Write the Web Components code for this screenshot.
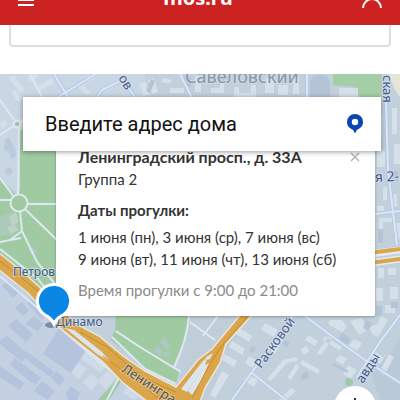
<!DOCTYPE html>
<html lang="ru">
<head>
<meta charset="utf-8">
<meta name="viewport" content="width=device-width, initial-scale=1">
<title>mos.ru</title>
<style>
  body {
    margin: 0;
    min-height: 100vh;
    display: flex;
    flex-direction: column;
    background: #fff;
    color: #333;
    font: 15px/22px Lato, "Noto Sans", sans-serif;
  }
  walk-map { flex: 1; }
</style>
</head>
<body>
<site-header>mos.ru</site-header>
<form-panel></form-panel>
<walk-map>
  <address-search label="Введите адрес дома"></address-search>
  <walk-card>
    <span slot="title">Ленинградский просп., д. 33А</span>
    <span slot="group">Группа 2</span>
    <span slot="dates">1 июня (пн), 3 июня (ср), 7 июня (вс)<br>9 июня (вт), 11 июня (чт), 13 июня (сб)</span>
    <span slot="time">Время прогулки с 9:00 до 21:00</span>
  </walk-card>
</walk-map>

<script>
class SiteHeader extends HTMLElement {
  constructor() {
    super();
    this.attachShadow({ mode: 'open' }).innerHTML = `
      <style>
        :host { display: block; }
        header {
          display: flex;
          justify-content: space-between;
          align-items: flex-end;
          height: 25px;
          padding: 0 16px;
          box-sizing: border-box;
          overflow: hidden;
          background: #cc2222;
          border-bottom: 1px solid #b93030;
        }
        a {
          padding-bottom: 12px;
          color: #fff;
          font: bold 20px/28px "Noto Sans", sans-serif;
          text-decoration: none;
        }
        button { padding: 0; border: 0; background: none; }
        svg { display: block; }
      </style>
      <header>
        <button aria-label="Меню"><svg width="20" height="34" viewBox="0 0 20 34" fill="none" stroke="#fff" stroke-width="2"><path d="M2 5H18M2 10H18M2 15H18"/></svg></button>
        <a href="#"><slot></slot></a>
        <button aria-label="Профиль"><svg width="24" height="36" viewBox="0 0 24 36" fill="none" stroke="#fff" stroke-width="2"><circle cx="12" cy="6" r="5"/><path d="M3 20C4 8 20 8 21 20"/></svg></button>
      </header>`;
  }
}

class FormPanel extends HTMLElement {
  constructor() {
    super();
    this.attachShadow({ mode: 'open' }).innerHTML = `
      <style>
        :host { display: block; padding: 0 9px 27px; }
        div {
          height: 20px;
          border: 2px solid #dfdfe1;
          border-top: 0;
          border-radius: 0 0 4px 4px;
        }
      </style>
      <div></div>`;
  }
}

class AddressSearch extends HTMLElement {
  constructor() {
    super();
    this.attachShadow({ mode: 'open' }).innerHTML = `
      <style>
        :host { display: block; position: relative; z-index: 2; }
        form {
          display: flex;
          align-items: center;
          height: 54px;
          padding: 0 18px 0 22px;
          background: #fff;
          box-shadow: 0 1px 5px rgba(0, 0, 0, .4);
        }
        input {
          flex: 1;
          min-width: 0;
          padding: 0;
          border: 0;
          outline: 0;
          background: none;
          color: #111;
          font: 20px/28px Roboto, sans-serif;
        }
        input::placeholder { color: #111; opacity: 1; }
        button { padding: 0; border: 0; background: none; }
        svg { display: block; }
      </style>
      <form>
        <input type="text">
        <button type="button" aria-label="Моё местоположение"><svg width="16" height="20" viewBox="0 0 16 20"><path fill="#0b45b5" fill-rule="evenodd" d="M8 0a8 8 0 0 1 8 8c0 4-2.700 6.600-6 7.700L8 19.500 6 15.700C2.700 14.600 0 12 0 8a8 8 0 0 1 8-8zm0 4.800a3.200 3.200 0 1 0 0 6.400 3.200 3.200 0 0 0 0-6.400z"/></svg></button>
      </form>`;
  }

  connectedCallback() {
    const input = this.shadowRoot.querySelector('input');
    input.placeholder = this.getAttribute('label');
    input.setAttribute('aria-label', this.getAttribute('label'));
  }
}

class WalkCard extends HTMLElement {
  constructor() {
    super();
    this.attachShadow({ mode: 'open' }).innerHTML = `
      <style>
        :host {
          display: block;
          position: relative;
          margin: -16px 6px 0 33px;
          padding: 11px 14px 15px 22px;
          background: #fff;
          border-radius: 0 0 2px 2px;
          box-shadow: 0 1px 3px rgba(0, 0, 0, .3);
        }
        .top { display: flex; justify-content: space-between; align-items: center; }
        h2 { margin: 0; font-size: 16px; line-height: 22px; }
        h3 { margin: 9px 0 5px; font-size: 15px; line-height: 22px; }
        p { margin: 0; }
        .time { margin-top: 9px; color: #8a8a8a; }
        button { padding: 0; border: 0; background: none; }
        svg { display: block; }
      </style>
      <div class="top">
        <h2><slot name="title"></slot></h2>
        <button aria-label="Закрыть"><svg width="12" height="12" viewBox="0 0 12 12" stroke="#b5b5b5" stroke-width="1.500"><path d="M2 2L10 10M10 2L2 10"/></svg></button>
      </div>
      <p><slot name="group"></slot></p>
      <h3>Даты прогулки:</h3>
      <p><slot name="dates"></slot></p>
      <p class="time"><slot name="time"></slot></p>`;

    this.shadowRoot.querySelector('button').addEventListener('click', () => this.remove());
  }
}

class WalkMap extends HTMLElement {
  constructor() {
    super();
    this.attachShadow({ mode: 'open' }).innerHTML = `
      <style>
        :host {
          display: block;
          position: relative;
          padding: 23px 19px 84px 23px;
          box-sizing: border-box;
          overflow: hidden;
          background: #c2d0db;
        }
        .canvas { position: absolute; inset: 0; width: 100%; height: 100%; }
        .canvas text { font-family: "Noto Sans", sans-serif; fill: #455a86; paint-order: stroke; stroke: #dbe5f0; stroke-width: 2px; stroke-opacity: .6; }
        .pin { position: absolute; left: 34px; top: 209px; z-index: 3; }
        .zoom {
          position: absolute;
          right: 24px;
          bottom: -28px;
          width: 42px;
          height: 42px;
          padding: 0;
          border: 0;
          border-radius: 50%;
          background: #fff;
        }
        .zoom svg { display: block; margin: auto; }
      </style>
      <svg class="canvas" viewBox="0 74 400 326" preserveAspectRatio="xMinYMin slice">
        <!-- districts -->
        <path fill="#c9d6e3" d="M0 74H145V155H20V196L0 178z"/>
        <path fill="#c4d1e2" d="M0 270L60 325 150 400H0z"/>
        <path fill="#b9c9d8" d="M372 375L400 340V400H380z"/>
        <path fill="#c0ced9" d="M180 316H250L205 400H180z"/>
        <path fill="#e6e4d7" d="M389 74H400V97L394 88z"/>
        <!-- parks -->
        <path fill="#a0cba2" d="M20 130H60V320L38 291 0 255V180L17 196 20 190z"/>
        <path fill="#a4cea5" d="M333 74H382V97H360L355 87 333 85z"/>
        <path fill="#a0cba2" d="M116 312H189L184 341 173 366 140 347 115 330z"/>
        <path fill="#a0cba2" d="M114 331L138 347 179 372 176 384 147 369 111 340z"/>
        <path fill="#a0cba2" d="M119 377L123 379 109 400H98z"/>
        <circle cx="349" cy="382" r="4" fill="#9fcaaa"/>
        <circle cx="17" cy="124" r="2" fill="#94c99d"/>
        <!-- buildings -->
        <g fill="#d5e0e9">
          <path d="M9 78l5-3 11 15-5 3zM11 92l4-2 7 9-4 3zM27 77l9-4 3 4-10 5zM35 87l16-9 3 5-16 9zM0 123l5-3 3 4-6 5zM78 87l5-3 7 8-4 3zM83 78l10-5 3 5-10 6zM139 84l7-2 4 12-6 2zM148 80l6-2 4 14-6 2zM163 78l9 2-2 4-9-2zM170 88h14v5h-14zM195 76h6v16h-6zM211 88h9v-6h4v11h-13zM234 87h5v6h12v-8h5v12h-22zM265 78h9v15h-9zM278 85h10v10h-10zM293 77h6v17h-6zM339 88h19v9h-19z"/>
          <path d="M225 354l12 7-3 6-12-7zM232 341l13 8-3 6-13-8zM239 328l13 8-3 6-13-8zM222 371l7 4-14 23-5-3zM261 330l4-7 13 7-4 7zM271 351l12-20 4 2-12 21zM245 363l4-7 8 5-4 7zM243 380l4-6 11 6-4 7zM267 379l4 2 16-18 11-2-2-4-13 3zM291 388l5 3-11 10h-7zM300 350l6-4 4 5-6 4zM302 360l18 10-2 4-18-10zM287 378l4 2 9-14-4-2zM317 353l4 2 13-18-4-3zM325 336l17 11-2 4-17-11zM308 335l10 6-3 5-10-6zM348 365l9 5-6 9-8-5z"/>
          <path d="M330 320h12l5 7-5 5-14-8zM350 321l12-3 5 12-8 5zM354 339l8 4-5 8-9-5zM369 328l8-4 5 7-8 5zM381 316l7 4-10 17-5-3zM376 352l8 6-4 6-8-6zM389 354l5 3-10 19-5-4zM340 355l7 3-4 7-8-5z"/>
          <path d="M377 115h5v23h-5zM377 151h8v16h-8zM392 108h5v26h-5zM394 144h6v20h-6zM383 187h4v13h-4zM379 218h14v4h-10v18h-4zM390 194h7v13h-7zM377 206h7v5h-7zM395 223h5v16h-5zM378 268h6v10h-6zM388 268h8v7h-8zM376 288h7v13h-7zM390 287h8v12h-8zM385 305h10v8h-10z"/>
          <path d="M81 359l7-11 21 13-8 12zM98 381l9-10 9 6-10 13zM69 371l8-9 10 7-8 10zM83 382l8-8 9 7-9 10zM123 393l7-10 11 8-6 9z" opacity=".7"/>
        </g>
        <g fill="#b5c3dd">
          <path d="M27 303l7-6 13 15-5 8zM15 308l7-6 7 9-6 5zM25 324l9-8 9 8-5 7zM8 326l8-7 17 15-7 8zM0 340l7-4 21 18-6 8-22-18zM43 354l16-26 29 19-17 26zM10 365l5-7 26 20-6 7zM22 356l4-5 28 21-4 5zM0 366l24 17-4 7-20-13zM34 391l8-10 13 10-7 9zM51 378l5-7 9 8-6 7zM66 393l5-7 9 7-3 7h-9zM2 286l6-5 12 10-7 7z"/>
          <path d="M5 140l4-3 5 10-5 6-5-4zM5 169l5-2 3 5-4 3-4-2zM10 151l5-3 1 8-5 3z" opacity=".7"/>
        </g>
        <g fill="#b4c4d6">
          <path d="M310 97V84Q310 75 320 75Q330 75 330 84V97zM151 79l4 2-5 12-4-2zM184 76h7v11h-7zM222 76h7v7h-7zM281 76h6v6h-6zM301 375l6-4 2 6-7 4zM334 363l15 8-2 2-15-8zM381 78h3v16h-3zM393 171h5v10h-5zM378 229h5v14h-5zM391 302h7v6h-7zM376 306h6v10h-6zM342 333l9 6-4 6-9-6zM366 320l6 3-4 8-5-3zM252 346l4 2-3 5-4-2zM285 340l5 3-3 4-5-3z"/>
          <path d="M154 350l4-4 5 6-4 4zM160 341l5-3 5 9-4 2zM164 352l6 1-1 4-6-2zM28 250l4-4 5 5-4 4z" opacity=".8"/>
        </g>
        <g fill="#acc9b9"><path d="M0 216l12-4 8 17-10 7-10-5zM0 226l8-4 3 10-11 5z"/><path fill="#bed2c6" d="M9 217l7-5 3 10-5 2 4 6-7 4-4-6 5-3z"/></g>
        <!-- streets -->
        <g fill="none" stroke="#dde8f3" stroke-width="2">
          <path d="M0 100L15 121M0 135L14 126M21 122L42 101M19 128L18 195M0 178L14 197M0 200H11M27 204H60M25 209L60 243M20 211L22 231L37 262L60 290M0 242L21 238M22 231L10 240M30 74L42 97M0 249L38 279L56 302"/>
          <circle cx="17" cy="124" r="3.500"/><circle cx="19" cy="203" r="8.500"/>
          <path d="M112 337L145 369 176 384M116 331L140 347 181 372M189 316Q187 340 174 368M190 322L215 340M218 316L203 336M119 377L107 400M111 371L142 398M0 276L34 305 67 334 98 361 123 380 145 400"/>
        </g>
        <g fill="none" stroke="#b6c9e8" stroke-width="4">
          <path d="M54 74L68 97M58 97L96 74M97 97L102 90 122 80M126 85L135 97M307 74V97M180 74L192 98M386 100L388 170 397 245M375 214L400 211M305 316L333 337 365 360 400 383M400 315L380 342 357 377M296 312L252 372 232 400M252 373L286 400"/>
        </g>
        <g fill="none" stroke="#dce7f5" stroke-width="2">
          <path d="M54 74L68 97M58 97L96 74M97 97L102 90 122 80M126 85L135 97M307 74V97M180 74L192 98M386 100L388 170 397 245M375 214L400 211M305 316L333 337 365 360 400 383M400 315L380 342 357 377M296 312L252 372 232 400M252 373L286 400"/>
        </g>
        <!-- highways -->
        <path fill="#dba649" stroke="#e9e6e1" stroke-width="1.500" d="M-2 252L24 273 45 292 62 310 78 325 99 336 123 356 145 371 176 387 198 360 212 349 241 314H253L226 344 220 363 205 388 200 402H148L122 382 103 362 60 328 28 293 -2 269z"/>
        <path fill="#dce5ee" d="M65 328l9 2 27 21 11 12-15-9zM181 389l21-27 6-6-3 9-18 27zM188 391l17-26 4-2-8 18-9 14zM206 357l7-4-3 6-4 1z"/>
        <path fill="none" stroke="#c98b2f" stroke-width="1" d="M0 261L38 291 64 318M80 332L107 347 142 377 176 392M103 356L130 376 158 398M210 364L221 347 247 317M192 398L210 364"/>
        <path fill="none" stroke="#e4edf5" stroke-width="7" d="M370 254L400 250M370 263L400 259"/>
        <path fill="none" stroke="#dba649" stroke-width="4" d="M370 253L400 249M370 263L400 259"/>
        <!-- labels -->
        <text font-size="18" x="185" y="83" style="fill:#8795a5">Савеловский</text>
        <text font-size="13" transform="translate(118 78) rotate(58)">ов</text>
        <text font-size="13" transform="translate(383 75) rotate(90)">ская</text>
        <text font-size="14" transform="translate(375 182) rotate(-3)">я 2-я</text>
        <text font-size="12" x="13" y="276">Петров</text>
        <ellipse cx="51" cy="325" rx="6" ry="3" fill="#7d8da5"/>
        <text font-size="12" x="56" y="326">Динамо</text>
        <text font-size="13" transform="translate(121 371) rotate(33)" style="fill:#4b5366;stroke:#f0d8a8">Ленингра</text>
        <text font-size="13" transform="translate(261 369) rotate(-54)">Расковой</text>
        <text font-size="13" transform="translate(363 384) rotate(-58)">авды</text>
      </svg>
      <slot></slot>
      <svg class="pin" width="40" height="44" viewBox="0 0 40 44">
        <path fill="#0b86e4" stroke="#fff" stroke-width="3" d="M20 1.500a16.500 16.500 0 0 1 7 31.500q-5 3-7 8-2-5-7-8A16.500 16.500 0 0 1 20 1.500z"/>
      </svg>
      <button class="zoom" aria-label="Приблизить"><svg width="20" height="20" viewBox="0 0 20 20" stroke="#333" stroke-width="2"><path d="M10 1V19M1 10H19"/></svg></button>`;
  }
}

customElements.define('site-header', SiteHeader);
customElements.define('form-panel', FormPanel);
customElements.define('address-search', AddressSearch);
customElements.define('walk-card', WalkCard);
customElements.define('walk-map', WalkMap);
</script>
</body>
</html>
